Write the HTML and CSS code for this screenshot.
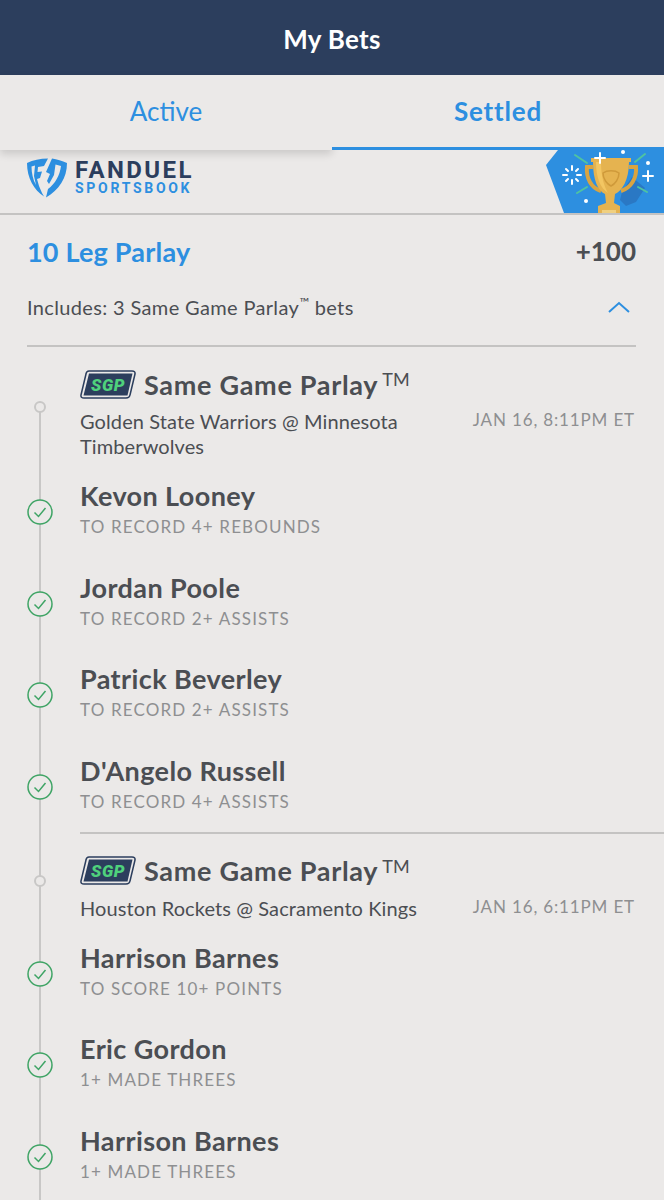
FILE: index.html
```html
<!DOCTYPE html>
<html lang="en">
  <head>
    <meta charset="UTF-8" />
    <meta name="viewport" content="width=device-width, initial-scale=1.0" />
    <title>My Bets</title>
    <link rel="stylesheet" href="styles.css">
  </head>
  <body>
    <header class="top-bar">My Bets</header>

    <nav class="tabs">
      <div class="tabs__item">Active</div>
      <div class="tabs__item tabs__item--active">Settled</div>
    </nav>

    <!-- Brand banner -->
    <section class="banner">
      <svg class="banner__shield" viewBox="0 0 40 40" width="40" height="40">
        <path fill="#2d8fe0" fill-rule="evenodd" d="M0 5 C6 2 13 0.500 21 0.500 L17 8 L11 9 L10.500 14 L15 13.500 L13 20 L10 21 L12 28 L15 35 L17 38.500 C7 32 0 20 0 5 Z M4.500 8.500 L8 7.500 L7 18 L9 27 C6 22 4.500 15 4.500 8.500 Z"/>
        <path fill="#2d8fe0" d="M25 0.500 C30 1 35 3 40 5 C40 20 32 32 19 39.500 L21 31 C28 26 33 17 34 8 L28.500 6.500 L27 17 L22 26 L20 23 L23 16 L19 14 Z"/>
      </svg>
      <div class="banner__brand">
        <div class="banner__name">FANDUEL</div>
        <div class="banner__sub">SPORTSBOOK</div>
      </div>
      <svg class="banner__trophy" viewBox="0 0 118 63" width="118" height="63">
        <polygon fill="#2d8fe0" points="12,0 0,15 18,63 118,63 118,0"/>
        <path fill="#2a78c4" d="M76 42 L86 27 L99 38 L90 52 L80 56 L74 50 Z"/>
        <path fill="none" stroke="#d9a441" stroke-width="4" d="M47 17 H41 C40 28 45 38 55 41 M83 17 H90 C91 28 85 38 75 41"/>
        <path fill="#e5b350" d="M45 8 H85 V12 H83 C83 30 76 41 69 44 L68 53 L74 56 V63 H52 V56 L60 53 L59 44 C52 41 47 30 47 12 H45 Z"/>
        <path fill="#f3c662" d="M50 12 H55 C55 26 58 36 62 43 C54 38 50 27 50 12 Z"/>
        <path fill="#f0d080" d="M56 60 H70 V63 H56 Z"/>
        <path fill="none" stroke="#cf9a3a" stroke-width="1.500" d="M57 23 C61 20 69 20 73 23 C73 29 69 34 65 36 C61 34 57 29 57 23 Z"/>
        <g stroke="#ffffff" stroke-width="2" stroke-linecap="round">
          <path d="M26 16 V20 M26 30 V34 M17 25 H21 M31 25 H35 M20 19 L22 21 M30 29 L32 31 M20 31 L22 29 M30 21 L32 19"/>
          <path d="M102 21 V31 M97 26 H107"/>
          <path d="M54 3 V13 M49 8 H59"/>
        </g>
        <g stroke="#4fc3a1" stroke-width="2" stroke-linecap="round">
          <path d="M29 5 L41 13 M99 4 L89 12 M31 43 L41 37 M101 42 L92 37"/>
        </g>
        <g fill="#ffffff">
          <circle cx="77" cy="2" r="2"/>
          <circle cx="102" cy="13" r="2"/>
          <circle cx="40" cy="51" r="2"/>
        </g>
      </svg>
    </section>

    <section class="parlay">
      <div class="parlay__top">
        <h2 class="parlay__title">10 Leg Parlay</h2>
        <span class="parlay__odds">+100</span>
      </div>
      <div class="parlay__includes">
        <span>Includes: 3 Same Game Parlay<sup class="parlay__tm">™</sup> bets</span>
        <svg class="parlay__chevron" viewBox="0 0 22 12" width="22" height="12">
          <path fill="none" stroke="#2d8fe0" stroke-width="2" d="M1 11 L11 2 L21 11"/>
        </svg>
      </div>
    </section>

    <section class="timeline">
      <div class="timeline__line"></div>

      <!-- Game 1 -->
      <div class="game">
        <div class="game__head">
          <div class="game__node"><span class="node"></span></div>
          <div class="game__info">
            <div class="game__title">
              <svg class="sgp" viewBox="0 0 56 29" width="56" height="29">
                <path fill="none" stroke="#2c3e5d" stroke-width="1.500" d="M9 1 H52 Q55.500 1 55 4 L50 25 Q49.500 28 46 28 H4 Q0.500 28 1 25 L6 4 Q6.500 1 9 1 Z"/>
                <path fill="#2c3e5d" d="M9 3.500 H52.500 L47.500 25.500 H3.500 Z"/>
                <text class="sgp__text" x="28" y="20.500" text-anchor="middle">SGP</text>
              </svg>
              <span class="game__name">Same Game Parlay</span><sup class="game__tm">TM</sup>
            </div>
            <div class="game__row">
              <div class="game__teams">Golden State Warriors @ Minnesota Timberwolves</div>
              <div class="game__date">JAN 16, 8:11PM ET</div>
            </div>
          </div>
        </div>

        <div class="leg">
          <svg class="check" viewBox="0 0 26 26" width="26" height="26"><circle cx="13" cy="13" r="12" fill="#ebe9e8" stroke="#3fa465" stroke-width="1.500"/><path fill="none" stroke="#3fa465" stroke-width="1.500" d="M7.500 13.500 L11.500 17.500 L18.500 9"/></svg>
          <div><div class="leg__name">Kevon Looney</div><div class="leg__market">TO RECORD 4+ REBOUNDS</div></div>
        </div>
        <div class="leg">
          <svg class="check" viewBox="0 0 26 26" width="26" height="26"><circle cx="13" cy="13" r="12" fill="#ebe9e8" stroke="#3fa465" stroke-width="1.500"/><path fill="none" stroke="#3fa465" stroke-width="1.500" d="M7.500 13.500 L11.500 17.500 L18.500 9"/></svg>
          <div><div class="leg__name">Jordan Poole</div><div class="leg__market">TO RECORD 2+ ASSISTS</div></div>
        </div>
        <div class="leg">
          <svg class="check" viewBox="0 0 26 26" width="26" height="26"><circle cx="13" cy="13" r="12" fill="#ebe9e8" stroke="#3fa465" stroke-width="1.500"/><path fill="none" stroke="#3fa465" stroke-width="1.500" d="M7.500 13.500 L11.500 17.500 L18.500 9"/></svg>
          <div><div class="leg__name">Patrick Beverley</div><div class="leg__market">TO RECORD 2+ ASSISTS</div></div>
        </div>
        <div class="leg leg--last">
          <svg class="check" viewBox="0 0 26 26" width="26" height="26"><circle cx="13" cy="13" r="12" fill="#ebe9e8" stroke="#3fa465" stroke-width="1.500"/><path fill="none" stroke="#3fa465" stroke-width="1.500" d="M7.500 13.500 L11.500 17.500 L18.500 9"/></svg>
          <div><div class="leg__name">D'Angelo Russell</div><div class="leg__market">TO RECORD 4+ ASSISTS</div></div>
        </div>
      </div>

      <div class="timeline__divider"></div>

      <!-- Game 2 -->
      <div class="game">
        <div class="game__head">
          <div class="game__node"><span class="node"></span></div>
          <div class="game__info">
            <div class="game__title">
              <svg class="sgp" viewBox="0 0 56 29" width="56" height="29">
                <path fill="none" stroke="#2c3e5d" stroke-width="1.500" d="M9 1 H52 Q55.500 1 55 4 L50 25 Q49.500 28 46 28 H4 Q0.500 28 1 25 L6 4 Q6.500 1 9 1 Z"/>
                <path fill="#2c3e5d" d="M9 3.500 H52.500 L47.500 25.500 H3.500 Z"/>
                <text class="sgp__text" x="28" y="20.500" text-anchor="middle">SGP</text>
              </svg>
              <span class="game__name">Same Game Parlay</span><sup class="game__tm">TM</sup>
            </div>
            <div class="game__row">
              <div class="game__teams">Houston Rockets @ Sacramento Kings</div>
              <div class="game__date">JAN 16, 6:11PM ET</div>
            </div>
          </div>
        </div>

        <div class="leg">
          <svg class="check" viewBox="0 0 26 26" width="26" height="26"><circle cx="13" cy="13" r="12" fill="#ebe9e8" stroke="#3fa465" stroke-width="1.500"/><path fill="none" stroke="#3fa465" stroke-width="1.500" d="M7.500 13.500 L11.500 17.500 L18.500 9"/></svg>
          <div><div class="leg__name">Harrison Barnes</div><div class="leg__market">TO SCORE 10+ POINTS</div></div>
        </div>
        <div class="leg">
          <svg class="check" viewBox="0 0 26 26" width="26" height="26"><circle cx="13" cy="13" r="12" fill="#ebe9e8" stroke="#3fa465" stroke-width="1.500"/><path fill="none" stroke="#3fa465" stroke-width="1.500" d="M7.500 13.500 L11.500 17.500 L18.500 9"/></svg>
          <div><div class="leg__name">Eric Gordon</div><div class="leg__market">1+ MADE THREES</div></div>
        </div>
        <div class="leg">
          <svg class="check" viewBox="0 0 26 26" width="26" height="26"><circle cx="13" cy="13" r="12" fill="#ebe9e8" stroke="#3fa465" stroke-width="1.500"/><path fill="none" stroke="#3fa465" stroke-width="1.500" d="M7.500 13.500 L11.500 17.500 L18.500 9"/></svg>
          <div><div class="leg__name">Harrison Barnes</div><div class="leg__market">1+ MADE THREES</div></div>
        </div>
      </div>
    </section>
  </body>
</html>
```

FILE: styles.css
```css
/* Page */
html,
body {
  margin: 0;
  height: 1200px;
  overflow: hidden;
}

body {
  background-color: #ebe9e8;
  font-family: "Lato", "Noto Sans", sans-serif;
  color: #4b4e53;
}

/* Header and tabs */
.top-bar {
  height: 75px;
  line-height: 78px;
  background-color: #2c3e5d;
  color: #fff;
  text-align: center;
  font-size: 26px;
  font-weight: 700;
  letter-spacing: 0.3px;
}

.tabs {
  display: flex;
  height: 75px;
  position: relative;
  z-index: 1;
}

.tabs__item {
  flex: 1;
  line-height: 72px;
  text-align: center;
  font-size: 26px;
  color: #2d8fe0;
  box-shadow: 0 4px 8px rgba(0, 0, 0, 0.14);
  background-color: #ebe9e8;
}

.tabs__item--active {
  font-weight: 700;
  letter-spacing: 0.8px;
  box-shadow: none;
  border-bottom: 3px solid #2d8fe0;
}

/* Brand banner */
.banner {
  display: flex;
  align-items: center;
  height: 63px;
  padding-left: 27px;
  border-bottom: 2px solid #c4c3c2;
}

.banner__shield {
  margin-right: 8px;
  margin-top: -8px;
}

.banner__brand {
  margin-top: -8px;
}

.banner__name {
  font-family: "Roboto", sans-serif;
  font-size: 24px;
  line-height: 22px;
  font-weight: 700;
  letter-spacing: 2.4px;
  color: #2c3e5d;
}

.banner__sub {
  font-family: "Roboto", sans-serif;
  font-size: 14px;
  line-height: 15px;
  font-weight: 700;
  letter-spacing: 2.7px;
  color: #2d8fe0;
}

.banner__trophy {
  margin-left: auto;
}

/* Parlay summary */
.parlay {
  margin: 0 28px 0 27px;
  height: 130px;
  border-bottom: 2px solid #c4c3c2;
}

.parlay__top {
  display: flex;
  justify-content: space-between;
  align-items: center;
  padding-top: 20px;
  height: 32px;
}

.parlay__title {
  margin: 0;
  font-size: 27px;
  font-weight: 700;
  letter-spacing: 0.2px;
  color: #2d8fe0;
}

.parlay__odds {
  font-size: 26px;
  font-weight: 700;
}

.parlay__includes {
  display: flex;
  justify-content: space-between;
  align-items: center;
  margin-top: 20px;
  padding-right: 6px;
  font-size: 20px;
  line-height: 30px;
  letter-spacing: 0.35px;
}

.parlay__tm {
  font-size: 13px;
}

.parlay__chevron {
  margin-top: 6px;
}

/* Timeline of games */
.timeline {
  position: relative;
}

.timeline__line {
  position: absolute;
  left: 39px;
  top: 60px;
  bottom: -20px;
  width: 2px;
  background-color: #c8c7c6;
}

.timeline__divider {
  height: 2px;
  margin: 15px 0 0 80px;
  background-color: #c4c3c2;
}

.game {
  position: relative;
}

.game__head {
  display: grid;
  grid-template-columns: 80px 1fr;
  padding-top: 22px;
  padding-bottom: 23px;
}

.game__node {
  align-self: center;
  width: 80px;
  height: 12px;
  margin-bottom: 15px;
  padding-left: 34px;
  box-sizing: border-box;
}

.node {
  display: block;
  width: 12px;
  height: 12px;
  box-sizing: border-box;
  border: 2px solid #c8c7c6;
  border-radius: 50%;
  background-color: #ebe9e8;
}

.game__title {
  display: flex;
  align-items: center;
  height: 30px;
}

.sgp {
  margin-right: 8px;
}

.sgp__text {
  font-family: "Roboto", sans-serif;
  font-size: 17px;
  font-weight: 900;
  font-style: italic;
  letter-spacing: 0.5px;
  fill: #4fd17c;
}

.game__name {
  font-size: 27px;
  font-weight: 700;
  letter-spacing: 0.7px;
}

.game__tm {
  font-size: 18px;
  margin: -10px 0 0 4px;
}

.game__row {
  display: flex;
  justify-content: space-between;
  margin-top: 10px;
  padding-right: 29px;
}

.game__teams {
  width: 350px;
  font-size: 20px;
  line-height: 25px;
  letter-spacing: 0.1px;
}

.game__date {
  font-size: 17px;
  line-height: 22px;
  letter-spacing: 0.85px;
  color: #8e8f91;
  white-space: nowrap;
}

/* One leg of the parlay */
.leg {
  display: grid;
  grid-template-columns: 80px 1fr;
  align-items: center;
  height: 60px;
  margin-bottom: 31.5px;
}

.leg--last {
  margin-bottom: 0;
}

.check {
  margin-left: 27px;
  position: relative;
}

.leg__name {
  font-size: 27px;
  line-height: 30px;
  margin-top: -1px;
  margin-bottom: 1px;
  font-weight: 700;
  letter-spacing: 0.4px;
}

.leg__market {
  font-size: 17px;
  line-height: 30px;
  letter-spacing: 1.15px;
  color: #8e8f91;
}
```
